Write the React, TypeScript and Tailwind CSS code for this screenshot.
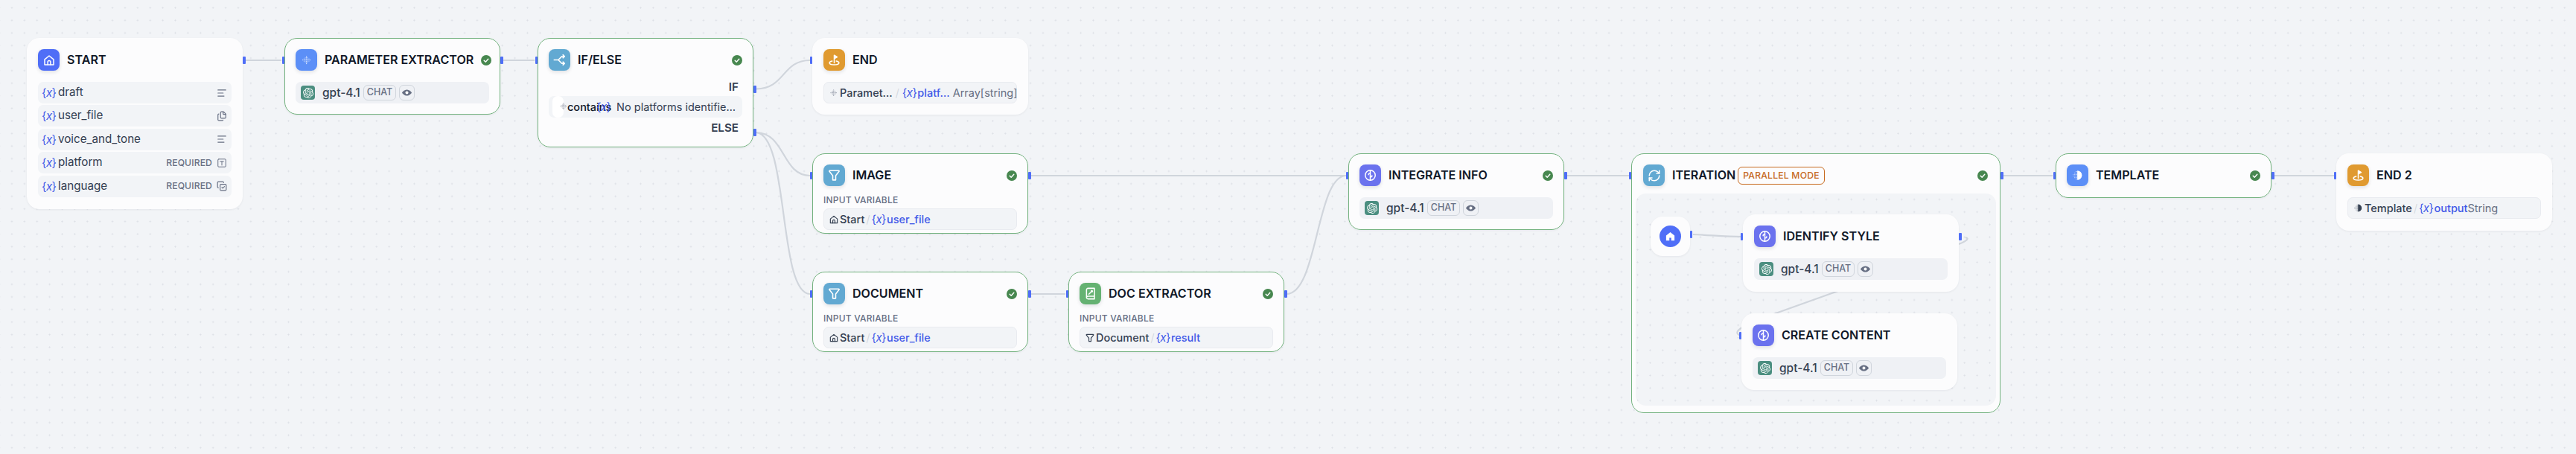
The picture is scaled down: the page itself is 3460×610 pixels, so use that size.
import React from "react";
import { AlignLeft, Files, CopyCheck, RefreshCw } from "lucide-react";
import { SiOpenai } from "react-icons/si";

const S = (p: React.SVGProps<SVGSVGElement>) => <svg viewBox="0 0 24 24" fill="none" stroke="currentColor" strokeWidth={2} strokeLinecap="round" strokeLinejoin="round" {...p} />;

const HomeI = ({ className = "w-[18px] h-[18px] text-white" }: { className?: string }) => (
  <S className={className}><path d="M4 10.5 12 4l8 6.5V20H4z" /><path d="M9.5 20v-5a2.5 2.5 0 0 1 5 0v5" /></S>
);
const HomeSolid = () => (
  <svg viewBox="0 0 24 24" className="w-[15px] h-[15px] text-white" fill="currentColor"><path fillRule="evenodd" d="M12 3 3 10.5V21h18V10.5zM10 21v-6h4v6z" /></svg>
);
const dotsP = [[0,0,0,1,0,0,0],[0,0,1,1,1,0,0],[0,1,1,1,1,1,0],[1,1,1,1,1,1,1],[0,1,1,1,1,1,0],[0,0,1,1,1,0,0],[0,0,0,1,0,0,0]];
const ParamI = ({ className = "w-[18px] h-[18px] text-white" }: { className?: string }) => (
  <svg viewBox="0 0 24 24" className={className} fill="currentColor">
    {dotsP.flatMap((r, y) => r.map((v, x) => v ? <rect key={x + "-" + y} x={4.3 + x * 2.2} y={4.3 + y * 2.2} width={1.3} height={1.3} opacity={x === 3 || y === 3 ? 1 : 0.55} /> : null))}
  </svg>
);
const BranchI = () => (
  <S className="w-[19px] h-[19px] text-white" strokeWidth={2.2}><path d="M3 12h7l6-6h4M10 12l6 6h4" /><path d="M18 3.5 20.5 6 18 8.5M18 15.5l2.5 2.5-2.5 2.5" /></S>
);
const FlagI = () => (
  <S className="w-[19px] h-[19px] text-white" strokeWidth={1.9}><path d="M12 17V4l5 3-5 3" fill="currentColor" /><path d="M8.5 14C5.5 14.6 4 15.7 4 17c0 2 3.5 3.2 8 3.2s8-1.2 8-3.2c0-1.3-1.5-2.4-4.5-3" /></S>
);
const FunnelI = ({ className = "w-[19px] h-[19px] text-white" }: { className?: string }) => (
  <S className={className}><path d="M4.5 4h15c.8 0 1.2.9.7 1.5L14.5 12.5V20h-5v-7.5L3.8 5.5C3.3 4.9 3.7 4 4.5 4z" /></S>
);
const BookI = () => (
  <S className="w-[19px] h-[19px] text-white" strokeWidth={1.9}><path d="M5.5 18.5V5.5A2.5 2.5 0 0 1 8 3h11v18H8a2.5 2.5 0 0 1-2.5-2.5zM5.5 18.5A2.5 2.5 0 0 1 8 16.5h11" /><path d="m9.5 13 3-3" /><circle cx="14.5" cy="8" r="1.2" fill="currentColor" /></S>
);
const BrainI = () => (
  <S className="w-[19px] h-[19px] text-white" strokeWidth={1.9}><circle cx="12" cy="12" r="8.5" /><path d="M12 3.5v17M12 8.5c-1.8 0-3 1-3 2.5M12 15c1.8 0 3-1 3-2.5" /></S>
);
const TemplateI = ({ className = "w-[19px] h-[19px] text-white" }: { className?: string }) => (
  <svg viewBox="0 0 24 24" className={className} fill="currentColor">
    <path d="M11.5 4a8 8 0 0 1 0 16z" />
    {[0, 1, 2, 3, 4, 5].map((i) => <rect key={i} x={9.2} y={5 + i * 2.6} width={1.3} height={1.3} />)}
    {[1, 2, 3, 4].map((i) => <rect key={i} x={6.6} y={5 + i * 2.6} width={1.3} height={1.3} opacity={0.7} />)}
    {[2, 3].map((i) => <rect key={i} x={4} y={5 + i * 2.6} width={1.3} height={1.3} opacity={0.5} />)}
  </svg>
);
const TBox = () => (
  <S className="w-[14px] h-[14px] text-[#676f83]" strokeWidth={1.7}><rect x="3" y="3" width="18" height="18" rx="2" /><path d="M8 8.5h8M12 8.5V17" /></S>
);
const Check = () => (
  <svg viewBox="0 0 14 14" className="w-[14px] h-[14px] shrink-0"><circle cx="7" cy="7" r="7" fill="#47874f" /><path d="m4.2 7.2 2 2 3.6-4" fill="none" stroke="#fff" strokeWidth="1.4" strokeLinecap="round" strokeLinejoin="round" /></svg>
);
const Eye = () => (
  <svg viewBox="0 0 24 24" className="w-[15px] h-[15px]"><path d="M1.5 12S5.5 5.5 12 5.5 22.5 12 22.5 12 18.5 18.5 12 18.5 1.5 12 1.5 12z" fill="#676f83" /><circle cx="12" cy="12" r="3.2" fill="#fff" /></svg>
);
const XVar = ({ className = "" }: { className?: string }) => (
  <span className={"shrink-0 text-[#4159e8] text-[15px] font-normal leading-none tracking-[-0.5px] " + className}>{"{"}<i>x</i>{"}"}</span>
);

const Handle = ({ className }: { className: string }) => <div className={"absolute w-[3.5px] h-[10px] bg-[#4f6ef7] rounded-[1px] " + className} />;
const IconBox = ({ color, children }: { color: string; children: React.ReactNode }) => (
  <div className={"w-[29px] h-[29px] shrink-0 rounded-[8px] flex items-center justify-center shadow-[0_2px_5px_rgba(16,24,40,0.12)] " + color}>{children}</div>
);

function Node({ pos, icon, iconColor, title, ok, h, l, r, children, gap = "gap-[10px]" }: { pos: string; icon: React.ReactNode; iconColor: string; title: string; ok?: boolean; h?: string; l?: boolean; r?: boolean; children?: React.ReactNode; gap?: string }) {
  return (
    <div className={"absolute w-[290px] rounded-[17px] bg-[#fcfcfd] px-[15px] pt-[15px] shadow-[0_1px_3px_rgba(16,24,40,0.06)] " + pos + " " + (h ?? "") + (ok ? " outline-[1.5px] outline-[#73b27f] -outline-offset-[1px]" : "")}>
      {l && <Handle className="left-[-3.5px] top-[25px]" />}
      {r && <Handle className="right-[-3.5px] top-[25px]" />}
      <div className={"flex items-center h-[29px] " + gap}>
        <IconBox color={iconColor}>{icon}</IconBox>
        <div className="flex-1 text-[16.1px] font-semibold text-[#101828] uppercase whitespace-nowrap">{title}</div>
        {ok && <Check />}
      </div>
      {children}
    </div>
  );
}

const ModelRow = () => (
  <div className="mt-[15px] h-[29px] rounded-[7px] bg-[#eff1f5] flex items-center pl-[7px]">
    <div className="w-[19px] h-[19px] rounded-[4px] bg-[#4b8e80] flex items-center justify-center text-white shrink-0"><SiOpenai size={14} /></div>
    <span className="ml-[10px] w-[52px] text-[15.5px] text-[#354052] font-medium whitespace-nowrap">gpt-4.1</span>
    <span className="ml-[3px] h-[21px] w-[44px] rounded-[6px] border-[1.5px] border-[#d0d5dc] flex items-center justify-center text-[12.5px] font-medium text-[#676f83]">CHAT</span>
    <span className="ml-[4px] h-[21px] w-[21px] rounded-[6px] border-[1.5px] border-[#d0d5dc] flex items-center justify-center"><Eye /></span>
  </div>
);

const VarRow = ({ name, right }: { name: string; right?: React.ReactNode }) => (
  <div className="h-[29px] rounded-[7px] bg-[#f2f4f7] flex items-center pl-[5px] pr-[6px]">
    <XVar className="w-[17px]" />
    <span className="ml-[5px] flex-1 text-[15.2px] text-[#354052]">{name}</span>
    {right}
  </div>
);
const Req = () => <span className="mr-[6px] text-[12.2px] font-medium text-[#676f83] tracking-[0.1px]">REQUIRED</span>;

const InputRow = ({ icon, node, v }: { icon: React.ReactNode; node: string; v: string }) => (
  <div className="mt-[2px] h-[29px] rounded-[7px] bg-[#f2f4f7] border border-[#e9ebf0] flex items-center pl-[6px] text-[14.5px] font-medium">
    {icon}
    <span className="ml-[1px] text-[#354052]">{node}</span>
    <span className="mx-[2px] text-[#d0d5dc] font-light">/</span>
    <XVar />
    <span className="ml-[1px] text-[#4159e8]">{v}</span>
  </div>
);
const InputLabel = () => <div className="mt-[10px] text-[12px] font-medium text-[#676f83] tracking-[0.2px] leading-[18px]">INPUT VARIABLE</div>;

const edge = "M329 81H378 M675 81H718 M1015 119.5C1055 119.5 1050 81 1088 81 M1015 178C1055 178 1050 236 1088 236 M1015 178C1060 178 1045 395 1088 395 M1384 236H1808 M1384 395H1431 M1728 395C1770 395 1768 236 1808 236 M2104 236H2188 M2690 236H2757 M3054 236H3135";

export default function App() {
  return (
    <div className="relative w-[3460px] h-[610px] overflow-hidden font-['Inter',sans-serif] bg-[#f2f4f7] bg-[image:radial-gradient(circle,#dcdfe5_0.9px,transparent_1.2px)] bg-[length:16.9px_16.9px] bg-[position:7.5px_2px]">
      <svg className="absolute left-0 top-0 w-[3460px] h-[610px]" viewBox="0 0 3460 610" fill="none">
        <path d={edge} stroke="#d0d5dc" strokeWidth="2.2" />
      </svg>

      <Node pos="left-[36px] top-[51px]" h="h-[230px]" icon={<HomeI />} iconColor="bg-[#4f6ef7]" title="Start" r>
        <div className="mt-[15px] flex flex-col gap-[2.4px]">
          <VarRow name="draft" right={<AlignLeft size={14} className="text-[#676f83]" />} />
          <VarRow name="user_file" right={<Files size={14} className="text-[#676f83]" />} />
          <VarRow name="voice_and_tone" right={<AlignLeft size={14} className="text-[#676f83]" />} />
          <VarRow name="platform" right={<><Req /><TBox /></>} />
          <VarRow name="language" right={<><Req /><CopyCheck size={14} className="text-[#676f83]" /></>} />
        </div>
      </Node>

      <Node pos="left-[382px] top-[51px]" h="h-[103px]" icon={<ParamI />} iconColor="bg-[#5c8ff7]" title="Parameter Extractor" ok l r><ModelRow /></Node>

      <Node pos="left-[722px] top-[51px]" h="h-[147px]" icon={<BranchI />} iconColor="bg-[#62a9d2]" title="IF/ELSE" ok l>
        <Handle className="right-[-3.5px] top-[63.5px]" />
        <Handle className="right-[-3.5px] top-[122px]" />
        <div className="mt-[10px] h-[24px] flex items-center justify-end pr-[5px] text-[15.2px] font-semibold text-[#354052]">IF</div>
        <div className="relative mt-[0px] h-[29px] rounded-[7px] bg-[#f2f4f7] flex items-center justify-end pr-[9px] text-[14.5px] text-[#354052]">
          <div className="absolute left-[5px] top-0 w-[15px] h-[29px] rounded-[7px] bg-white" />
          <ParamI className="absolute left-[13px] top-[7px] w-[14px] h-[14px] text-[#676f83]" />
          <span className="absolute left-[25px] font-medium text-[#101828]">contains</span>
          <XVar className="absolute left-[64px] top-[7px]" />
          No platforms identifie…
        </div>
        <div className="h-[29px] flex items-center justify-end pr-[5px] text-[15.2px] font-semibold text-[#354052]">ELSE</div>
      </Node>

      <Node pos="left-[1091px] top-[51px]" h="h-[103px]" icon={<FlagI />} iconColor="bg-[#e09a30]" title="End" l>
        <div className="mt-[15px] h-[29px] rounded-[7px] bg-[#f2f4f7] border border-[#e9ebf0] flex items-center pl-[6px] text-[14.5px] font-medium whitespace-nowrap">
          <ParamI className="w-[14px] h-[14px] text-[#676f83] shrink-0" />
          <span className="ml-[1px] text-[#354052]">Paramet…</span>
          <span className="mx-[4px] text-[#d0d5dc] font-light">/</span>
          <XVar />
          <span className="ml-[1px] text-[#4159e8]">platf…</span>
          <span className="ml-[4px] font-normal text-[#676f83]">Array[string]</span>
        </div>
      </Node>

      <Node pos="left-[1091px] top-[206px]" h="h-[108px]" icon={<FunnelI />} iconColor="bg-[#62a9d2]" title="Image" ok l r>
        <InputLabel />
        <InputRow icon={<HomeI className="w-[14px] h-[14px] text-[#354052] shrink-0" />} node="Start" v="user_file" />
      </Node>

      <Node pos="left-[1091px] top-[365px]" h="h-[108px]" icon={<FunnelI />} iconColor="bg-[#62a9d2]" title="Document" ok l r>
        <InputLabel />
        <InputRow icon={<HomeI className="w-[14px] h-[14px] text-[#354052] shrink-0" />} node="Start" v="user_file" />
      </Node>

      <Node pos="left-[1435px] top-[365px]" h="h-[108px]" icon={<BookI />} iconColor="bg-[#65b272]" title="Doc Extractor" ok l r>
        <InputLabel />
        <InputRow icon={<FunnelI className="w-[14px] h-[14px] text-[#354052] shrink-0" />} node="Document" v="result" />
      </Node>

      <Node pos="left-[1811px] top-[206px]" h="h-[103px]" icon={<BrainI />} iconColor="bg-[#6b72ee]" title="Integrate Info" ok l r><ModelRow /></Node>

      {/* Iteration container */}
      <div className="absolute left-[2191px] top-[206px] w-[496px] h-[349px] rounded-[17px] bg-[#fcfcfd] outline-[1.5px] outline-[#73b27f] -outline-offset-[1px] flex flex-col">
        <Handle className="left-[-3.5px] top-[25px]" />
        <Handle className="right-[-3.5px] top-[25px]" />
        <div className="h-[54px] pl-[16px] pr-[16px] pt-[15px] flex items-start">
          <IconBox color="bg-[#62a9d2]"><RefreshCw size={18} className="text-white" strokeWidth={2} /></IconBox>
          <div className="ml-[10px] w-[87px] h-[29px] flex items-center text-[16.1px] font-semibold text-[#101828] whitespace-nowrap">ITERATION</div>
          <div className="ml-[1px] mt-[3px] h-[24px] w-[117px] rounded-[6px] border-[1.5px] border-[#c76a1f] flex items-center justify-center text-[12.2px] font-medium text-[#c76a1f] tracking-[0.2px]">PARALLEL MODE</div>
          <div className="flex-1" />
          <div className="h-[29px] flex items-center pr-[1px]"><Check /></div>
        </div>
        <div className="relative mx-[6px] h-[285px] rounded-[14px] bg-[#f2f4f7] bg-[image:radial-gradient(circle,#dcdfe5_0.9px,transparent_1.2px)] bg-[length:16.9px_16.9px] bg-[position:11px_-0.5px]">
          <svg className="absolute left-0 top-0 w-[484px] h-[285px]" viewBox="2197 260 484 285" fill="none">
            <path d="M2274 315C2300 316 2315 318 2340 318 M2631 328Q2648 321 2640 319 M2480 387L2385 421Q2318 444 2338 451" stroke="#d0d5dc" strokeWidth="2.2" />
          </svg>
          <div className="absolute left-[20px] top-[31px] w-[53px] h-[53px] rounded-[16px] bg-[#fcfcfd] flex items-center justify-center shadow-[0_1px_3px_rgba(16,24,40,0.06)]">
            <Handle className="right-[-3px] top-[19px]" />
            <div className="w-[29px] h-[29px] rounded-full bg-[#4f6ef7] flex items-center justify-center"><HomeSolid /></div>
          </div>
          <Node pos="left-[144px] top-[28px]" h="h-[104px]" icon={<BrainI />} iconColor="bg-[#6b72ee]" title="Identify Style" l r><ModelRow /></Node>
          <Node pos="left-[142px] top-[161px]" h="h-[103px]" icon={<BrainI />} iconColor="bg-[#6b72ee]" title="Create Content" l><ModelRow /></Node>
        </div>
      </div>

      <Node pos="left-[2761px] top-[206px]" h="h-[60px]" icon={<TemplateI />} iconColor="bg-[#5c8ff7]" title="Template" ok l r />

      <Node pos="left-[3138px] top-[206px]" h="h-[104px]" icon={<FlagI />} iconColor="bg-[#e09a30]" title="End 2" l>
        <div className="mt-[15px] h-[29px] rounded-[7px] bg-[#f2f4f7] border border-[#e9ebf0] flex items-center pl-[6px] text-[14.5px] font-medium whitespace-nowrap">
          <TemplateI className="w-[15px] h-[15px] text-[#354052] shrink-0" />
          <span className="ml-[1px] text-[#354052]">Template</span>
          <span className="mx-[2px] text-[#d0d5dc] font-light">/</span>
          <XVar />
          <span className="ml-[1px] text-[#4159e8]">output</span>
          <span className="font-normal text-[#676f83]">String</span>
        </div>
      </Node>
    </div>
  );
}
